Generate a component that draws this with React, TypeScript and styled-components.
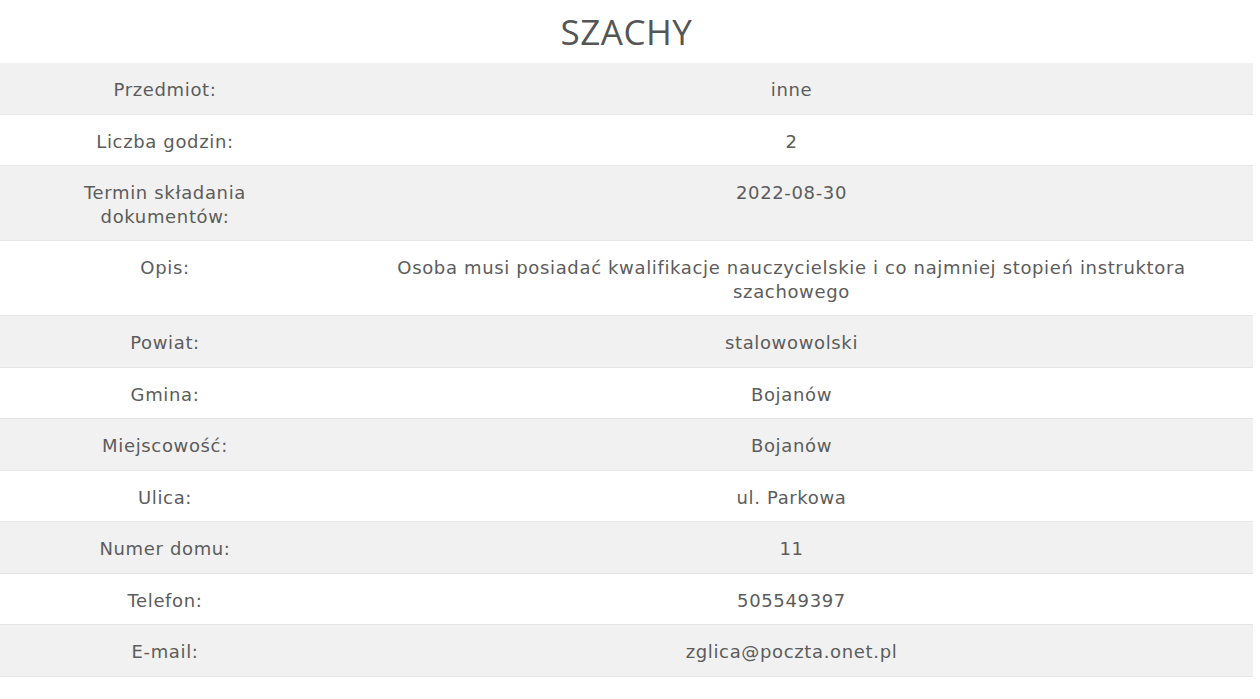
import styled, { createGlobalStyle } from 'styled-components'

const GlobalStyle = createGlobalStyle`
  body {
    margin: 0;
    background: #ffffff;
    font-family: "DejaVu Sans", "Open Sans", sans-serif;
    color: #555555;
  }
`

const Page = styled.div`
  width: 1253px;
`

const Title = styled.h1`
  margin: 0;
  height: 63px;
  display: flex;
  align-items: center;
  justify-content: center;
  font-family: "Open Sans", sans-serif;
  font-size: 35px;
  font-weight: 500;
  color: #555555;
  letter-spacing: 0.5px;
`

const Table = styled.table`
  width: 100%;
  border-collapse: collapse;
  font-size: 18px;
  line-height: 23.5px;
  letter-spacing: 0.65px;
  color: #5c5c5c;
`

const Row = styled.tr`
  border-bottom: 1px solid #e6e6e6;
  &:nth-child(odd) {
    background: #f1f1f1;
  }
`

const Label = styled.td`
  width: 330px;
  padding: 15px 40px 12px;
  box-sizing: border-box;
  text-align: center;
  vertical-align: top;
`

const Value = styled.td`
  padding: 15px 50px 12px;
  text-align: center;
  vertical-align: top;
`

const rows: [string, string][] = [
  ['Przedmiot:', 'inne'],
  ['Liczba godzin:', '2'],
  ['Termin składania dokumentów:', '2022-08-30'],
  ['Opis:', 'Osoba musi posiadać kwalifikacje nauczycielskie i co najmniej stopień instruktora szachowego'],
  ['Powiat:', 'stalowowolski'],
  ['Gmina:', 'Bojanów'],
  ['Miejscowość:', 'Bojanów'],
  ['Ulica:', 'ul. Parkowa'],
  ['Numer domu:', '11'],
  ['Telefon:', '505549397'],
  ['E-mail:', 'zglica@poczta.onet.pl'],
]

const App = () => {
  return (
    <Page>
      <GlobalStyle />
      <Title>SZACHY</Title>
      <Table>
        <tbody>
          {rows.map(([label, value]) => (
            <Row key={label}>
              <Label>{label}</Label>
              <Value>{value}</Value>
            </Row>
          ))}
        </tbody>
      </Table>
    </Page>
  )
}

export default App
